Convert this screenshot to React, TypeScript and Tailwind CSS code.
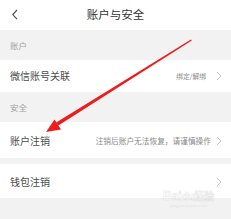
import React from "react";

const font = { fontFamily: '"Noto Sans CJK SC", "Noto Sans", sans-serif' };

function Chevron() {
  return (
    <svg width="6" height="10" viewBox="0 0 6 10" className="shrink-0">
      <polyline points="1,1 5,5 1,9" fill="none" stroke="#c4c4c4" strokeWidth="1" />
    </svg>
  );
}

export default function App() {
  return (
    <div
      className="relative w-[231px] h-[219px] overflow-hidden bg-[#f2f2f2] flex flex-col"
      style={font}
    >
      <div className="h-[30px] bg-white grid grid-cols-[30px_1fr_30px] items-center shrink-0">
        <svg width="30" height="30" viewBox="0 0 30 30">
          <polyline points="17,10 12.8,14.6 17,19.2" fill="none" stroke="#555" strokeWidth="1.2" />
        </svg>
        <div className="text-center text-[11.5px] leading-none text-[#333]">账户与安全</div>
        <div />
      </div>

      <div className="h-[30px] shrink-0 flex items-center pl-[10px] text-[8.5px] leading-none text-[#a3a3a3]">
        账户
      </div>

      <div className="h-[32px] shrink-0 bg-white flex items-center justify-between pl-[10px] pr-[9px]">
        <span className="text-[10px] leading-none text-[#4d4d4d]">微信账号关联</span>
        <div className="flex items-center gap-[10px]">
          <span className="text-[6.8px] leading-none text-[#8a8a8a]">绑定/解绑</span>
          <Chevron />
        </div>
      </div>

      <div className="h-[30px] shrink-0 flex items-center pl-[10px] text-[8.5px] leading-none text-[#a3a3a3]">
        安全
      </div>

      <div className="h-[36px] shrink-0 bg-white flex items-center justify-between pl-[10px] pr-[9px] pt-[2px]">
        <span className="text-[10px] leading-none text-[#4d4d4d]">账户注销</span>
        <div className="flex items-center gap-[5px]">
          <span className="text-[7.7px] leading-none text-[#8a8a8a]">注销后账户无法恢复，请谨慎操作</span>
          <Chevron />
        </div>
      </div>

      <div className="h-[6px] shrink-0" />

      <div className="h-[34px] shrink-0 bg-white flex items-center justify-between pl-[10px] pr-[9px] pt-[1px]">
        <span className="text-[10px] leading-none text-[#4d4d4d]">钱包注销</span>
        <Chevron />
      </div>

      <div className="flex-1" />

      <svg
        className="absolute left-0 top-0 pointer-events-none"
        width="231"
        height="219"
        viewBox="0 0 231 219"
      >
        <polygon points="191,39.4 191.8,40.6 58.3,125.6 56.2,122.4" fill="#ee1c1c" />
        <polygon points="46,132 54.5,119.5 61,129.5" fill="#ee1c1c" />
      </svg>

      <div className="absolute left-[163px] top-[190px] flex flex-col items-center pointer-events-none opacity-60">
        <span
          className="text-[12px] leading-none font-bold text-white"
          style={{ fontFamily: '"Liberation Sans", sans-serif', WebkitTextStroke: "0.5px #d0d0d0" }}
        >
          Bai<span className="text-[10px]">du</span>
          <span style={font} className="text-[10px]">经验</span>
        </span>
        <span
          className="text-[5px] leading-none text-[#dadada] mt-[1px]"
          style={{ fontFamily: '"Liberation Serif", serif' }}
        >
          jingyan.baidu.com
        </span>
      </div>
    </div>
  );
}
